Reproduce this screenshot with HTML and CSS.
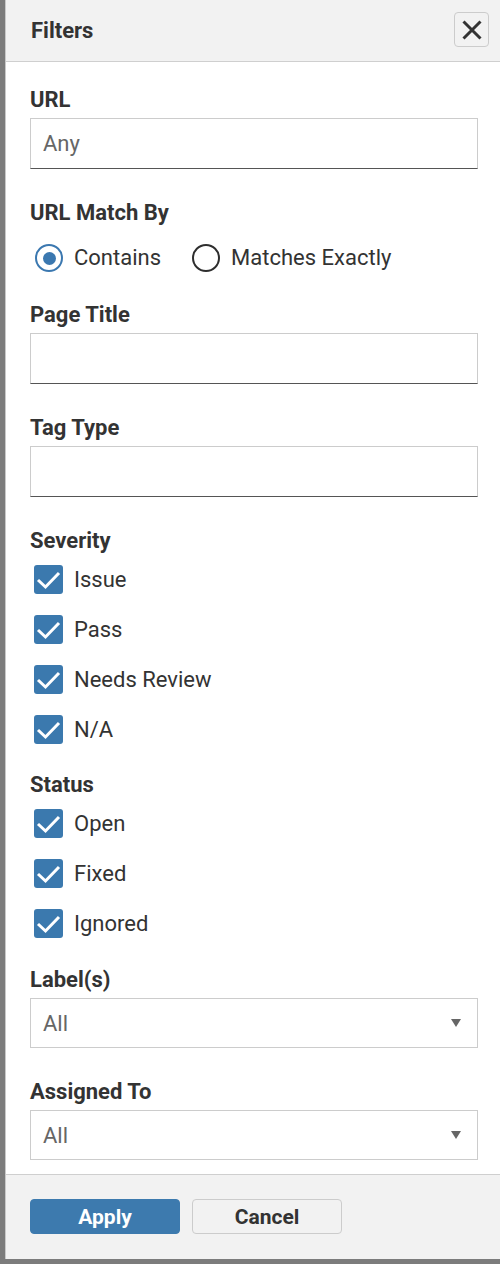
FILE: index.html
```html
<!DOCTYPE html>
<html>
  <head>
    <meta charset="utf-8">
    <meta name="viewport" content="width=device-width, initial-scale=1">
    <title>Filters</title>
    <link rel="stylesheet" href="styles.css">
  </head>
  <body>
    <aside class="panel">
      <header class="panel-head">
        <h2>Filters</h2>
        <button class="close" type="button" aria-label="Close">
          <svg width="20" height="20" viewBox="0 0 20 20"><path d="M1.5 1.5 L18.5 18.5 M18.5 1.5 L1.5 18.5" stroke="#333" stroke-width="3" fill="none"/></svg>
        </button>
      </header>

      <form class="panel-body">
        <div class="field">
          <label class="field-label">URL</label>
          <input class="text" type="text" placeholder="Any">
        </div>

        <div class="field field-radios">
          <label class="field-label field-label-gap">URL Match By</label>
          <div class="radios">
            <label class="opt"><span class="radio on"></span>Contains</label>
            <label class="opt"><span class="radio"></span>Matches Exactly</label>
          </div>
        </div>

        <div class="field">
          <label class="field-label">Page Title</label>
          <input class="text" type="text">
        </div>

        <div class="field">
          <label class="field-label">Tag Type</label>
          <input class="text" type="text">
        </div>

        <div class="field field-checks">
          <label class="field-label field-label-gap-sm">Severity</label>
          <label class="opt check-row"><span class="box"><svg width="29" height="29" viewBox="0 0 29 29"><path d="M4 15 L11.5 22 L25 8" stroke="#fff" stroke-width="3" fill="none"/></svg></span>Issue</label>
          <label class="opt check-row"><span class="box"><svg width="29" height="29" viewBox="0 0 29 29"><path d="M4 15 L11.5 22 L25 8" stroke="#fff" stroke-width="3" fill="none"/></svg></span>Pass</label>
          <label class="opt check-row"><span class="box"><svg width="29" height="29" viewBox="0 0 29 29"><path d="M4 15 L11.5 22 L25 8" stroke="#fff" stroke-width="3" fill="none"/></svg></span>Needs Review</label>
          <label class="opt check-row"><span class="box"><svg width="29" height="29" viewBox="0 0 29 29"><path d="M4 15 L11.5 22 L25 8" stroke="#fff" stroke-width="3" fill="none"/></svg></span>N/A</label>
        </div>

        <div class="field field-checks2">
          <label class="field-label field-label-gap-sm">Status</label>
          <label class="opt check-row"><span class="box"><svg width="29" height="29" viewBox="0 0 29 29"><path d="M4 15 L11.5 22 L25 8" stroke="#fff" stroke-width="3" fill="none"/></svg></span>Open</label>
          <label class="opt check-row"><span class="box"><svg width="29" height="29" viewBox="0 0 29 29"><path d="M4 15 L11.5 22 L25 8" stroke="#fff" stroke-width="3" fill="none"/></svg></span>Fixed</label>
          <label class="opt check-row"><span class="box"><svg width="29" height="29" viewBox="0 0 29 29"><path d="M4 15 L11.5 22 L25 8" stroke="#fff" stroke-width="3" fill="none"/></svg></span>Ignored</label>
        </div>

        <div class="field">
          <label class="field-label">Label(s)</label>
          <div class="select"><span>All</span><i class="caret"></i></div>
        </div>

        <div class="field">
          <label class="field-label">Assigned To</label>
          <div class="select"><span>All</span><i class="caret"></i></div>
        </div>
      </form>

      <footer class="panel-foot">
        <button class="btn btn-primary" type="button">Apply</button>
        <button class="btn" type="button">Cancel</button>
      </footer>
    </aside>
  </body>
</html>
```

FILE: styles.css
```css
body { margin: 0; background: #7c7c7c; font-family: Roboto, "Liberation Sans", Arial, sans-serif; color: #333; }
.panel { margin-left: 5px; height: 1259px; background: #fff; border-left: 1px solid #c9c9c9; display: flex; flex-direction: column; box-sizing: border-box; }

.panel-head { flex-shrink: 0; height: 62px; box-sizing: border-box; background: #f2f2f2; border-bottom: 1px solid #cfcfcf; display: flex; align-items: center; justify-content: space-between; padding: 0 11px 1px 25px; }
.panel-head h2 { margin: 0; font-size: 22px; font-weight: 700; color: #333; }
.close { width: 35px; height: 35px; padding: 0; margin-top: -1px; background: #f2f2f2; border: 1px solid #ccc; border-radius: 4px; display: flex; align-items: center; justify-content: center; }

.panel-body { flex: 1; min-height: 0; padding: 26px 22px 0 24px; }
.field { margin-bottom: 32px; }
.field:last-child { margin-bottom: 0; }
.field-radios { margin-bottom: 31px; }
.field-checks { margin-bottom: 29px; }
.field-checks2 { margin-bottom: 30px; }
.field-label { display: block; font-size: 22px; line-height: 24px; font-weight: 700; color: #333; margin-bottom: 6px; }
.field-label-gap { margin-bottom: 19px; }
.field-label-gap-sm { margin-bottom: 12px; }

.text { display: block; width: 100%; height: 51px; box-sizing: border-box; border: 1px solid #ccc; border-bottom-color: #555; padding: 0 12px; font: 22px Roboto, "Liberation Sans", Arial, sans-serif; color: #333; outline: none; }
.text::placeholder { color: #666; }

.radios { display: flex; gap: 26px; }
.opt { display: flex; align-items: center; gap: 11px; font-size: 22px; line-height: 28px; color: #333; }
.radio { width: 28px; height: 28px; box-sizing: border-box; border: 2px solid #2e2e2e; border-radius: 50%; margin-left: 5px; display: flex; align-items: center; justify-content: center; }
.radio.on { border: 2.5px solid #3b78b0; }
.radio.on::after { content: ""; width: 13px; height: 13px; border-radius: 50%; background: #3b78b0; }

.check-row { height: 29px; margin-bottom: 21px; }
.check-row:last-child { margin-bottom: 0; }
.box { width: 29px; height: 29px; margin-left: 4px; background: #3b79ae; border-radius: 3px; display: block; }
.box svg { display: block; }

.select { height: 50px; box-sizing: border-box; border: 1px solid #ccc; display: flex; align-items: center; justify-content: space-between; padding: 0 16px 0 12px; font-size: 22px; color: #666; }
.caret { width: 0; height: 0; border-left: 5px solid transparent; border-right: 5px solid transparent; border-top: 8px solid #666; }

.panel-foot { flex-shrink: 0; height: 85px; box-sizing: border-box; background: #f2f2f2; border-top: 1px solid #cfcfcf; padding: 24px 24px 0; display: flex; gap: 12px; align-items: flex-start; }
.btn { width: 150px; height: 35px; border: 1px solid #ccc; border-radius: 4px; background: #f2f2f2; font: 700 21px Roboto, "Liberation Sans", Arial, sans-serif; color: #333; padding: 0; }
.btn-primary { background: #3d7aae; border-color: #3d7aae; color: #fff; }
```
